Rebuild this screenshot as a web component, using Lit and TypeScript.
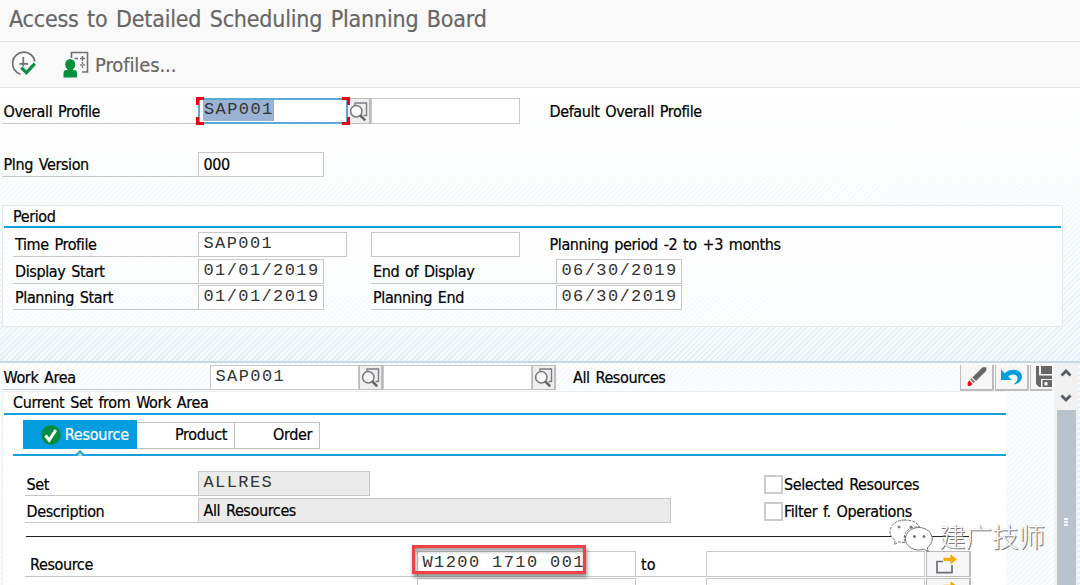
import { LitElement, html, svg, css } from "lit";
import { customElement } from "lit/decorators.js";

const iconExecute = svg`<svg class="i-exec" width="28" height="28" viewBox="0 0 28 28" fill="none">
  <path d="M10.500 24.200A11.300 11.300 0 1 1 25 11.500" stroke="#707070" stroke-width="1.700"/>
  <path d="M13.300 7v9.500M9.500 13.800h8.500" stroke="#707070" stroke-width="1.700"/>
  <path d="M11.200 17.600l5.200 5L24.800 13.600" stroke="#0b8f45" stroke-width="3.200"/></svg>`;

const iconProfiles = svg`<svg class="i-prof" width="27" height="27" viewBox="0 0 27 27" fill="none">
  <path d="M8.500 7V1.500H24.500V21H19" stroke="#707070" stroke-width="1.600"/>
  <path d="M11.500 7.500h3.500M17 7.500h5M19.500 5v5" stroke="#707070" stroke-width="1.400"/>
  <path d="M17 14h5" stroke="#707070" stroke-width="1.300"/><circle cx="19.500" cy="12" r=".9" fill="#707070"/><circle cx="19.500" cy="16" r=".9" fill="#707070"/>
  <ellipse cx="7.200" cy="13.500" rx="5" ry="5.600" fill="#068f3e"/>
  <path d="M4.500 17h5.500v2.500h-5.500zM.5 26.500v-4.500q0-3 3-3h7.500q3 0 3 3v4.500z" fill="#068f3e"/></svg>`;

const iconSearch = svg`<svg width="20" height="21" viewBox="0 0 20 21" fill="none">
  <path d="M6 4.500V2h11.500v12.500h-3" stroke="#7c7c84" stroke-width="1.400"/>
  <circle cx="7.300" cy="10.300" r="5.700" fill="#fafafa" fill-opacity=".9" stroke="#777" stroke-width="1.500"/>
  <path d="M11.200 14.300l5 5" stroke="#666" stroke-width="2.600"/></svg>`;

const iconPencil = svg`<svg width="22" height="22" viewBox="0 0 22 22">
  <path d="M16.500 1.200h3.800v3.600L10 15l-3.600-3.600z" fill="#666"/>
  <path d="M5.400 12.200l3.600 3.600-1.400 1.200-3.400-3.400z" fill="#777"/>
  <path d="M3.300 14.500l3.200 3.200q-.6 2.300-4.700 2.300-.8-3.900 1.500-5.500z" fill="#e0101c"/></svg>`;

const iconUndo = svg`<svg width="24" height="20" viewBox="0 0 24 20">
  <path d="M1 2.500V13H11.800L8.200 9.600C11.500 6 17.800 7 17.500 11.500 17.300 14.500 15.500 16 13.500 17.500 18.500 17 22 13.500 22 9.500 21.600 2.300 11 .2 4.700 6.300z" fill="#0a9ddd"/></svg>`;

const iconSave = svg`<svg width="16" height="22" viewBox="0 0 16 22">
  <path d="M0 0h3v9.500h13V13H5v8H3L0 18z" fill="#666"/>
  <path d="M5 0h11v8H5zM6.500 14h9.500v7H6.500z" fill="#666"/><path d="M8.500 16h3v3.500h-3z" fill="#fff"/></svg>`;

const iconMulti = svg`<svg width="22" height="20" viewBox="0 0 22 20" fill="none">
  <path d="M7 7.500H1V18.700h15V11" stroke="#6b6f7a" stroke-width="1.700"/>
  <path d="M7.500 3.700h7V.2l6.500 5-6.500 5V7h-7z" fill="#f2a900"/></svg>`;

const chevron = (d: string) => svg`<svg width="12" height="8" viewBox="0 0 12 8" fill="none"><path d=${d} stroke="#555b62" stroke-width="2.800"/></svg>`;

@customElement("app-root")
export class AppRoot extends LitElement {
  static styles = css`
    :host { display: block; width: 1080px; height: 585px; overflow: hidden; position: relative; box-sizing: border-box;
      font: 16px/24px "DejaVu Sans Condensed", "DejaVu Sans", sans-serif; font-stretch: condensed; letter-spacing: -.38px; word-spacing: 1.6px; color: #000;
      -webkit-text-stroke: .2px currentColor;
      background: linear-gradient(#fff 88px, rgba(255,255,255,.65) 205px, rgba(255,255,255,.0) 360px),
        repeating-linear-gradient(135deg, #f8fbfd 0 1.9px, #e5f0f6 1.9px 3.77px); }
    * { box-sizing: border-box; }
    svg { display: block; flex: none; }
    .title { height: 42px; background: #f9f9f9; border-bottom: 1px solid #e4e4e4; padding-left: 9px;
      font-size: 23px; line-height: 38px; color: #666; letter-spacing: -.18px; word-spacing: 2px; white-space: nowrap; }
    .tools { height: 46px; background: #f9f9f9; border-bottom: 1px solid #e2e2e2; display: flex; align-items: flex-start; }
    .i-exec { margin: 8px 0 0 10px; }
    .i-prof { margin: 9px 0 0 25px; }
    .profiles { margin-left: 5px; font-size: 20px; line-height: 46px; letter-spacing: -.1px; color: #666; }
    .row { display: flex; height: 25px; white-space: nowrap; }
    .lab { border-bottom: 1px solid #c6c6c6; padding: 2px 0 0 1.5px; flex: none; }
    .txt { padding-top: 2px; flex: none; }
    .in { background: #fff; border: 1px solid #c8c8c8; flex: none; padding-left: 4.5px; line-height: 24px; }
    .mono { font: 17px/22px "Liberation Mono", monospace; letter-spacing: 1.4px; word-spacing: 0; color: #333; -webkit-text-stroke: 0; }
    .gray { background: #ebebeb; }
    .btn { background: #efefef; border: 1px solid #bbb; border-width: 1px 2px 1px 1px; flex: none; display: flex; align-items: center; justify-content: center; }
    .sb { width: 24px; }
    .first .sb { width: 23px; border-left: 0; }
    .w126 { width: 126px; } .w149 { width: 149px; } .w150 { width: 150px; } .w173 { width: 173px; } .w473 { width: 473px; } .w219 { width: 219px; }
    .w185 { width: 185px; } .w196 { width: 196px; } .w208 { width: 208px; }
    .first { margin: 10px 0 0 2px; height: 26px; }
    .first .lab { height: 26px; }
    .focus { position: relative; border: 2px solid #5aa9d6; padding-left: 4px; }
    .sel { background: #9ab3d3; display: block; width: 71px; height: 21px; line-height: 20px; padding: 0 0 0 1px; margin-left: -1px; }
    .corner { position: absolute; width: 8px; height: 8px; border: 0 solid #e2081a; }
    .tl { left: -4px; top: -3px; border-width: 3px 0 0 3px; } .tr { right: -4px; top: -3px; border-width: 3px 3px 0 0; }
    .bl { left: -4px; bottom: -3px; border-width: 0 0 3px 3px; } .br { right: -4px; bottom: -3px; border-width: 0 3px 3px 0; }
    .plng { margin: 28px 0 0 2px; }
    .plng .lab { padding-top: 1px; }
    .period { margin: 28px 0 0 2px; width: 1061px; height: 122px; border: 1px solid #e3e8eb; background: rgba(255,255,255,.65); display: flex; flex-direction: column; }
    .head { background: #fff; height: 22px; border-bottom: 2px solid #16a0db; padding: 0 0 0 9px; margin-right: 1px; margin-left: 1px; line-height: 21px; flex: none; }
    .period .rows { padding: 4px 0 0 10px; display: flex; flex-direction: column; gap: 1.500px; }
    .period .lab { padding: 1px 0 0 2px; } .period .txt { padding-top: 1px; }
    .g24 { margin-left: 24px; } .g29 { margin-left: 29.500px; } .g47 { margin-left: 47px; }
    .lower { margin-top: 34px; height: 224px; display: flex; border-top: 2px solid #c6d7e5; }
    .main { width: 1054px; background: linear-gradient(rgba(255,255,255,.65), rgba(255,255,255,.5)); flex: none; }
    .area { padding: 2px 0 0 2px; height: 28px; }
    .area .in, .area .btn, .area .lab { height: 25px; }
    .area .lab, .area .txt { padding-top: 1px; }
    .all { margin-left: 17px; }
    .tb { height: 26px; background: #f6f6f6; border: solid #bdbdbd; border-width: 0 2px 2px 1px; margin-right: 1px; display: flex; align-items: center; justify-content: center; flex: none; }
    .push { margin-left: auto; }
    .t1, .t2 { width: 34px; }
    .t3 { width: 22px; margin-right: 2px; border-right: 0; justify-content: flex-end; }
    .panel { margin-left: 2px; width: 1004px; height: 195px; background: rgba(255,255,255,.96); border: solid #edf0f2; border-width: 1px 0 0 1px; }
    .panel .head { background: none; height: 23px; margin-right: 0; line-height: 22px; }
    .tabs { display: flex; height: 33px; margin: 6px 0 0 20px; }
    .tab { height: 27px; margin-top: 1px; border: 1px solid #c0c0c0; border-left: 0; background: #fff; text-align: right; padding: 0 7px; line-height: 24px; }
    .tab.on { width: 114px; height: 29px; margin-top: -1px; background: #049ddf; border: 0; color: #fff; display: flex; align-items: center; justify-content: flex-end; gap: 4px; padding-right: 8px; letter-spacing: -.2px; }
    .product { width: 98px; } .order { width: 85px; }
    .rule { margin-left: 10px; height: 2px; background: #169fdc; position: relative; }
    .notch { position: absolute; left: 60px; top: -4px; }
    .set { margin: 15px 0 0 22px; height: 25px; } .desc { margin: 2px 0 0 22px; height: 25px; }
    .set .txt, .set .lab, .desc .txt, .desc .lab { padding-top: 1.500px; }
    .set .in { width: 172px; }
    .chk { width: 19px; height: 19px; border: 2px solid #cbcbcb; background: #fff; flex: none; margin-top: 4px; margin-right: 1px; }
    .c1 { margin-left: 394px; } .c2 { margin-left: 93px; }
    .black { height: 1px; background: #222; margin: 13px 0 0 23px; width: 943px; }
    .res { margin: 14px 0 0 22px; height: 26px; } .res .in { height: 26px; } .res .lab, .res .to { height: 26px; padding-left: 5px; padding-top: 1.500px; }
    .res2 { margin: 1px 0 0 22px; height: 25px; }
    .w392 { width: 392px; } .to { width: 70px; border-bottom: 1px solid #c6c6c6; letter-spacing: 0; }
    .res .btn, .res2 .btn { width: 45px; background: #f6f6f6; padding-right: 2px; margin-left: 1px; }
    .sp392 { margin-left: 392px; } .sp70 { margin-left: 70px; }
    .scroll { width: 24px; background: #f1f1f1; display: flex; flex-direction: column; align-items: center; padding-top: 6px; gap: 17px; flex: none; }
    .thumb { width: 19px; margin: -9px 0 0 0; flex: 1; background: #b8c2cd; display: flex; flex-direction: column; align-items: center; gap: 1px; padding-top: 108px; }
    .thumb i { width: 4px; height: 2px; background: #f4f6f8; }
    .mark { position: absolute; left: 412px; top: 545px; width: 174px; height: 29px; border: 3px solid #ef4146; box-shadow: 1px 3px 4px rgba(0,0,0,.45), inset 1px 3px 4px rgba(0,0,0,.4); }
    .wm { position: absolute; left: 888px; top: 517px; display: flex; -webkit-text-stroke: 0; }
    .wm span { font: 300 26.500px/38px "Noto Sans CJK SC", sans-serif; color: #fff; letter-spacing: 0; margin-left: 5px; text-shadow: 1px 1px 0 #777, .5px 0 1px #888; }
  `;

  private searchBtn() {
    return html`<div class="btn sb">${iconSearch}</div>`;
  }

  private dates(l1: string, v1: string, l2: string, v2: string) {
    return html`<div class="row"><div class="lab w185">${l1}</div><div class="in mono w126">${v1}</div>
      <div class="lab g47 w185">${l2}</div><div class="in mono w126">${v2}</div></div>`;
  }

  render() {
    return html`
      <div class="title">Access to Detailed Scheduling Planning Board</div>
      <div class="tools">${iconExecute}${iconProfiles}<span class="profiles">Profiles...</span></div>
      <div class="row first">
        <div class="lab w196">Overall Profile</div>
        <div class="in mono focus w150"><span class="sel">SAP001</span>
          <i class="corner tl"></i><i class="corner tr"></i><i class="corner bl"></i><i class="corner br"></i></div>
        ${this.searchBtn()}<div class="in w149"></div><div class="txt g29">Default Overall Profile</div>
      </div>
      <div class="row plng"><div class="lab w196">Plng Version</div><div class="in w126">000</div></div>
      <section class="period">
        <div class="head">Period</div>
        <div class="rows">
          <div class="row"><div class="lab w185">Time Profile</div><div class="in mono w149">SAP001</div>
            <div class="in g24 w149"></div><div class="txt g29">Planning period -2 to +3 months</div></div>
          ${this.dates("Display Start", "01/01/2019", "End of Display", "06/30/2019")}
          ${this.dates("Planning Start", "01/01/2019", "Planning End", "06/30/2019")}
        </div>
      </section>
      <div class="lower">
        <div class="main">
          <div class="row area">
            <div class="lab w208">Work Area</div><div class="in mono w149">SAP001</div>${this.searchBtn()}
            <div class="in w149"></div>${this.searchBtn()}<div class="txt all">All Resources</div>
            <div class="tb t1 push">${iconPencil}</div><div class="tb t2">${iconUndo}</div><div class="tb t3">${iconSave}</div>
          </div>
          <section class="panel">
            <div class="head">Current Set from Work Area</div>
            <div class="tabs">
              <div class="tab on"><svg width="20" height="20" viewBox="0 0 20 20"><circle cx="10" cy="10" r="10" fill="#078c43"/><path d="M4.500 10.500l3.700 4.700L14.800 5" fill="none" stroke="#fff" stroke-width="3"/></svg>Resource</div>
              <div class="tab product">Product</div><div class="tab order">Order</div>
            </div>
            <div class="rule"><svg class="notch" width="14" height="7" viewBox="0 0 14 7"><path d="M3 5.500L7 1.500l4 4" fill="#fff" stroke="#169fdc" stroke-width="2"/></svg></div>
            <div class="row set"><div class="lab w173">Set</div><div class="in gray mono">ALLRES</div><i class="chk c1"></i><div class="txt">Selected Resources</div></div>
            <div class="row desc"><div class="lab w173">Description</div><div class="in gray w473">All Resources</div><i class="chk c2"></i><div class="txt">Filter f. Operations</div></div>
            <div class="black"></div>
            <div class="row res"><div class="lab w392">Resource</div><div class="in mono w219">W1200 1710 001</div><div class="to">to</div><div class="in w219"></div><div class="btn">${iconMulti}</div></div>
            <div class="row res2"><div class="in sp392 w219"></div><div class="in sp70 w219"></div><div class="btn">${iconMulti}</div></div>
          </section>
        </div>
        <div class="scroll">${chevron("M1.500 6.500L6 2l4.500 4.500")}${chevron("M1.500 1.500L6 6l4.500-4.500")}<div class="thumb"><i></i><i></i><i></i></div></div>
      </div>
      <div class="mark"></div>
      <div class="wm"><svg width="46" height="38" viewBox="0 0 46 38" fill="#fff" stroke="#777" stroke-width="1">
        <path d="M17 3C8.500 3 2 8 2 14.500c0 4 2.200 7 5.300 9l-1 4 5-2.700c2 .6 4 .7 6 .6C13 15 23 8.500 31.500 10 29.500 5.500 24 3 17 3z" stroke-dasharray="3 1"/>
        <path d="M31 10.500c-7.300 0-13.500 5-13.500 11.500S23.700 33 31 33c1.600 0 3.200-.3 4.600-.8l4.600 2.500-1-4c3-2 5-5 5-8.700 0-6.500-6-11.500-13.200-11.500z"/>
        <g fill="#555"><circle cx="11" cy="10" r="1"/><circle cx="23" cy="10" r="1"/><circle cx="26.500" cy="19.500" r="1"/><circle cx="36" cy="19.500" r="1"/></g></svg><span>建广技师</span></div>
    `;
  }
}
